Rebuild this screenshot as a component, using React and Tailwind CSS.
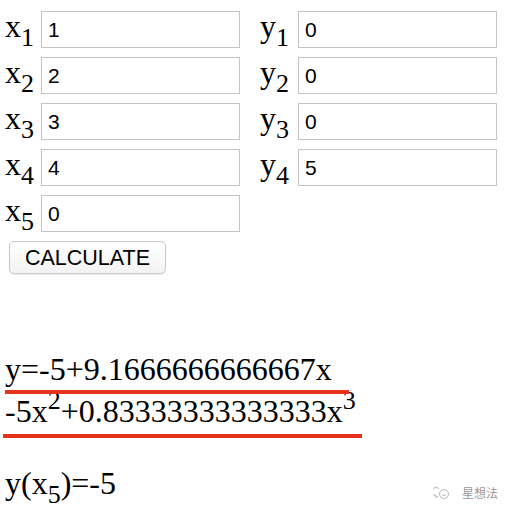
import React from "react";

const serif = { fontFamily: '"Liberation Serif", "Times New Roman", serif' };

function Label({ v, n, w }) {
  return (
    <div className={`${w} h-[37px] text-[32px] leading-[37px] text-black`} style={serif}>
      <span className="relative top-[-3px]">
        {v}
        <span className="relative top-[9px] text-[26px] leading-none">{n}</span>
      </span>
    </div>
  );
}

function Field({ value }) {
  return (
    <input
      readOnly
      value={value}
      className="w-[199px] h-[37px] border border-[#c4c4c4] bg-white px-[6px] text-[21px] text-black outline-none"
      style={{ fontFamily: '"Liberation Sans", Arial, sans-serif' }}
    />
  );
}

export default function App() {
  const rows = [
    ["1", "0"],
    ["2", "0"],
    ["3", "0"],
    ["4", "5"],
  ];
  return (
    <div className="w-[512px] h-[512px] bg-white relative overflow-hidden">
      <div className="pt-[11px] flex flex-col gap-[9px]">
        {rows.map((r, i) => (
          <div key={i} className="flex h-[37px]">
            <div className="w-[5px]" />
            <Label v="x" n={String(i + 1)} w="w-[36px]" />
            <Field value={r[0]} />
            <div className="w-[20px]" />
            <Label v="y" n={String(i + 1)} w="w-[38px]" />
            <Field value={r[1]} />
          </div>
        ))}
        <div className="flex h-[37px]">
          <div className="w-[5px]" />
          <Label v="x" n="5" w="w-[36px]" />
          <Field value="0" />
        </div>
      </div>
      <div className="pl-[9px] pt-[9px]">
        <button
          className="w-[157px] h-[33px] rounded-[5px] border border-[#c9c9c9] bg-gradient-to-b from-white to-[#f3f3f3] text-[21.5px] text-black shadow-[0_1px_1px_rgba(0,0,0,0.08)]"
          style={{ fontFamily: '"Liberation Sans", Arial, sans-serif' }}
        >
          CALCULATE
        </button>
      </div>
      <div className="pl-[5px] pt-[77px] text-[32px] text-black" style={serif}>
        <div className="leading-[37px] h-[37px]">y=-5+9.1666666666667x</div>
        <div className="h-[5px]" />
        <div className="leading-[37px] h-[37px]">
          -5x<span className="relative top-[-13px] text-[26px] leading-none">2</span>+0.83333333333333x
          <span className="relative top-[-13px] text-[26px] leading-none">3</span>
        </div>
        <div className="h-[35px]" />
        <div className="leading-[37px] h-[37px]">
          y(x<span className="relative top-[9px] text-[26px] leading-none">5</span>)=-5
        </div>
      </div>
      <div className="absolute left-[5px] top-[390px] w-[344px] h-[4px] bg-[#e6321b]" />
      <div className="absolute left-[3px] top-[434px] w-[359px] h-[4px] bg-[#e6321b]" />
      <div className="absolute left-[433px] top-[486px] flex items-center gap-[12px] text-[#9a9a9a]">
        <svg width="17" height="14" viewBox="0 0 17 14" fill="none" stroke="#b8b8b8" strokeWidth="1">
          <path d="M6 2.5 A4.5 4 0 1 0 3 9.5 L2.5 11.5 L5 10.2" />
          <circle cx="11" cy="8" r="4.5" />
          <path d="M9 8.8 q2 1.5 4 0" />
        </svg>
        <span className="text-[12px] leading-none" style={{ fontFamily: '"Noto Sans CJK SC", sans-serif' }}>星想法</span>
      </div>
    </div>
  );
}
